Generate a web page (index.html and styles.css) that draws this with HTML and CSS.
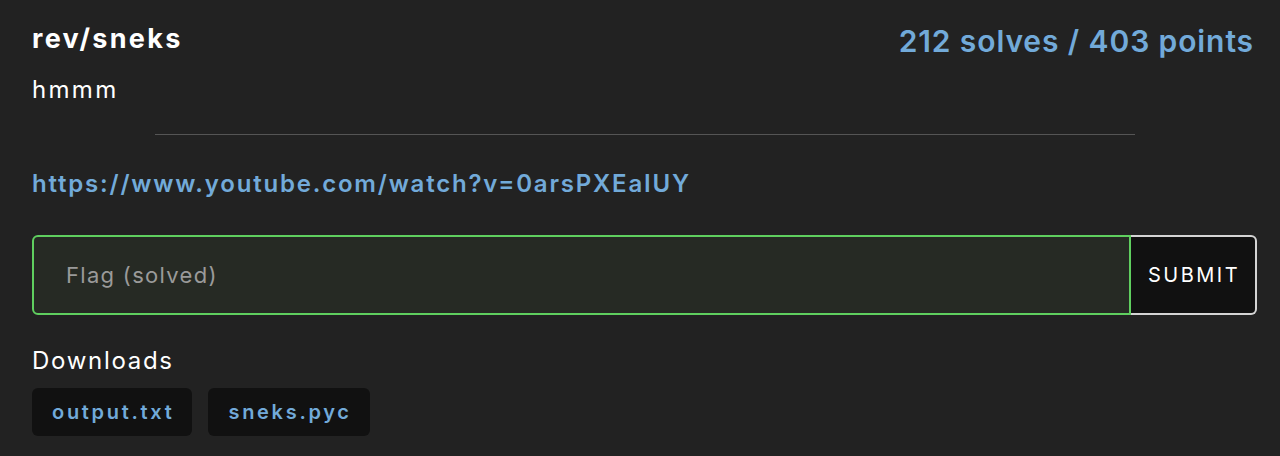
FILE: index.html
```html
<!DOCTYPE html>
<html>
<head>
<meta charset="utf-8">
<link rel="stylesheet" href="styles.css">
</head>
<body>
<div class="challenge">
  <div class="head">
    <div class="title">rev/sneks</div>
    <div class="score">212 solves / 403 points</div>
  </div>
  <div class="desc">hmmm</div>
  <hr class="divider">
  <a class="link" href="#">https://www.youtube.com/watch?v=0arsPXEaIUY</a>
  <form class="flag-form">
    <input class="flag-input" type="text" placeholder="Flag (solved)">
    <button class="submit" type="button">SUBMIT</button>
  </form>
  <div class="downloads-label">Downloads</div>
  <div class="downloads">
    <a class="dl" href="#">output.txt</a>
    <a class="dl" href="#">sneks.pyc</a>
  </div>
</div>
</body>
</html>
```

FILE: styles.css
```css
html, body {
  margin: 0;
  padding: 0;
  background: #222222;
  font-family: Inter, "Noto Sans", sans-serif;
  color: #ffffff;
}
.challenge {
  padding: 21px 23px 0 32px;
}
.head {
  display: flex;
  justify-content: space-between;
  align-items: flex-start;
}
.title {
  font-size: 27px;
  font-weight: 700;
  line-height: 36px;
  letter-spacing: 2.3px;
}
.score {
  font-size: 30px;
  font-weight: 600;
  color: #72aad9;
  line-height: 36px;
  padding-top: 2px;
  letter-spacing: 0.9px;
  margin-right: 3px;
}
.desc {
  font-size: 24px;
  line-height: 32px;
  margin-top: 15px;
  letter-spacing: 2.3px;
}
.divider {
  width: 80%;
  border: 0;
  border-top: 1px solid #555;
  margin: 28px auto 33px;
}
.link {
  display: block;
  font-size: 24px;
  font-weight: 600;
  color: #72aad9;
  text-decoration: none;
  line-height: 32px;
  letter-spacing: 1.8px;
}
.flag-form {
  display: flex;
  margin-top: 35px;
  height: 80px;
}
.flag-input {
  flex: 1;
  background: #262a24;
  border: 2px solid #5fcf5f;
  border-radius: 6px 0 0 6px;
  padding: 0 32px;
  font-family: inherit;
  font-size: 22px;
  letter-spacing: 1.3px;
  color: #fff;
  outline: none;
}
.flag-input::placeholder {
  color: #9a9a9a;
}
.submit {
  width: 126px;
  background: #111111;
  border: 2px solid #d4d4d4;
  border-left: 0;
  border-radius: 0 6px 6px 0;
  color: #fff;
  font-family: inherit;
  font-size: 20px;
  letter-spacing: 2.5px;
  padding: 0 0 0 2px;
}
.downloads-label {
  font-size: 24px;
  line-height: 32px;
  margin-top: 30px;
  letter-spacing: 1.7px;
}
.downloads {
  display: flex;
  gap: 16px;
  margin-top: 11px;
}
.dl {
  background: #111111;
  border-radius: 6px;
  padding: 0 18px 0 20px;
  height: 48px;
  line-height: 48px;
  font-size: 20px;
  font-weight: 600;
  color: #72aad9;
  text-decoration: none;
  letter-spacing: 2.7px;
}
```
